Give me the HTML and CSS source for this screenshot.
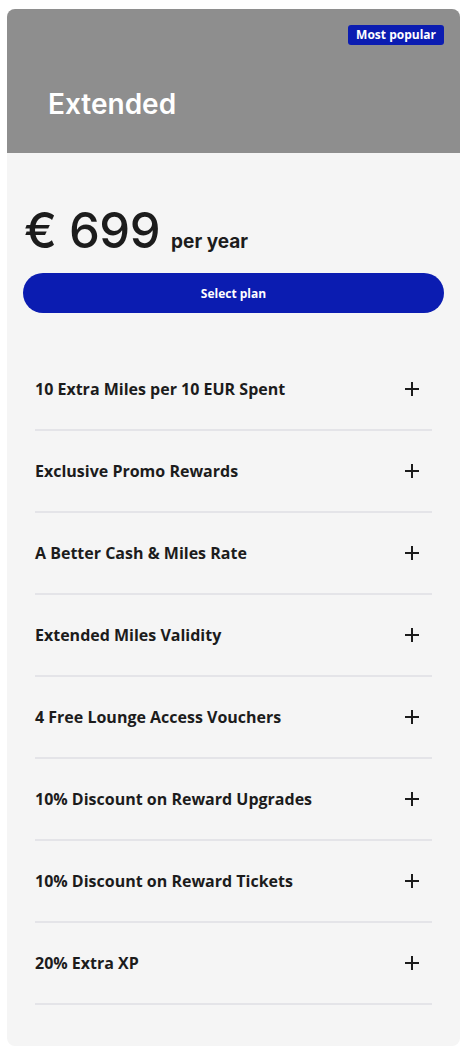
FILE: index.html
```html
<!DOCTYPE html>
<html lang="en">
<head>
<meta charset="utf-8">
<link rel="stylesheet" href="styles.css">
</head>
<body>
<div class="card">
  <div class="card-head">
    <span class="badge">Most popular</span>
    <h2 class="plan-name">Extended</h2>
  </div>
  <div class="card-body">
    <div class="price"><span class="amount">€ 699</span><span class="period">per year</span></div>
    <button class="select-btn">Select plan</button>
    <ul class="benefits">
      <li class="benefit"><span>10 Extra Miles per 10 EUR Spent</span><svg class="plus" viewBox="0 0 16 16"><path d="M8 1v14M1 8h14"/></svg></li>
      <li class="benefit"><span>Exclusive Promo Rewards</span><svg class="plus" viewBox="0 0 16 16"><path d="M8 1v14M1 8h14"/></svg></li>
      <li class="benefit"><span>A Better Cash &amp; Miles Rate</span><svg class="plus" viewBox="0 0 16 16"><path d="M8 1v14M1 8h14"/></svg></li>
      <li class="benefit"><span>Extended Miles Validity</span><svg class="plus" viewBox="0 0 16 16"><path d="M8 1v14M1 8h14"/></svg></li>
      <li class="benefit"><span>4 Free Lounge Access Vouchers</span><svg class="plus" viewBox="0 0 16 16"><path d="M8 1v14M1 8h14"/></svg></li>
      <li class="benefit"><span>10% Discount on Reward Upgrades</span><svg class="plus" viewBox="0 0 16 16"><path d="M8 1v14M1 8h14"/></svg></li>
      <li class="benefit"><span>10% Discount on Reward Tickets</span><svg class="plus" viewBox="0 0 16 16"><path d="M8 1v14M1 8h14"/></svg></li>
      <li class="benefit"><span>20% Extra XP</span><svg class="plus" viewBox="0 0 16 16"><path d="M8 1v14M1 8h14"/></svg></li>
    </ul>
  </div>
</div>
</body>
</html>
```
FILE: styles.css
```css
* { box-sizing: border-box; }
html, body { margin: 0; background: #fff; }
body {
  padding: 9px 8px 0 7px;
  font-family: "Open Sans", "Liberation Sans", sans-serif;
  color: #1c1c1c;
}
.card {
  width: 453px;
  border-radius: 8px;
  overflow: hidden;
  background: #f5f5f5;
}
.card-head {
  background: #8e8e8e;
  height: 144px;
  padding: 16px 16px 0 41px;
  display: flex;
  flex-direction: column;
}
.badge {
  align-self: flex-end;
  background: #0b1cb1;
  color: #fff;
  font-weight: 700;
  font-size: 12px;
  line-height: 20px;
  height: 20px;
  padding: 0 8px;
  border-radius: 3px;
}
.plan-name {
  margin: 43px 0 0;
  font-family: Inter, "Noto Sans", sans-serif;
  font-weight: 600;
  font-size: 28px;
  line-height: 32px;
  color: #fff;
  letter-spacing: 0;
}
.card-body {
  padding: 50px 16px 41px;
}
.price {
  display: flex;
  align-items: baseline;
  padding-left: 1px;
}
.amount {
  font-family: Inter, "Noto Sans", sans-serif;
  font-weight: 500;
  font-size: 49px;
  line-height: 56px;
  letter-spacing: -0.5px;
}
.period {
  font-family: Inter, "Noto Sans", sans-serif;
  font-weight: 700;
  font-size: 19px;
  margin-left: 11px;
}
.select-btn {
  display: block;
  width: 100%;
  height: 40px;
  margin-top: 14px;
  border: 0;
  border-radius: 20px;
  background: #0b1cb1;
  color: #fff;
  font-family: "Open Sans", sans-serif;
  font-weight: 700;
  font-size: 12px;
}
.benefits {
  list-style: none;
  margin: 36px 12px 0;
  padding: 0;
}
.benefit {
  display: flex;
  align-items: center;
  justify-content: space-between;
  height: 82px;
  border-bottom: 2px solid #e4e4e8;
  font-size: 16px;
  font-weight: 700;
  padding-right: 12px;
}
.plus {
  width: 16px;
  height: 16px;
  stroke: #1c1c1c;
  stroke-width: 2;
  fill: none;
}
```
